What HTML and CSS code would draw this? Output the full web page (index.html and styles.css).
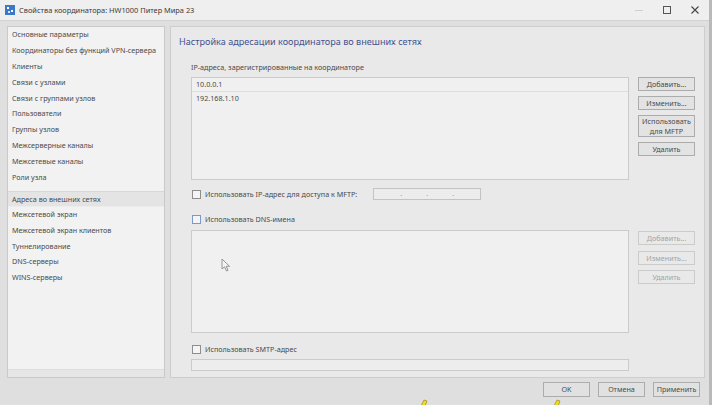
FILE: index.html
```html
<!DOCTYPE html>
<html lang="ru">
<head>
<meta charset="utf-8">
<link rel="stylesheet" href="styles.css">
</head>
<body>
<div class="window">
  <div class="titlebar">
    <svg class="appicon" width="10" height="10" viewBox="0 0 10 10"><rect x="0" y="0" width="10" height="10" fill="#3a78c9"/><rect x="2" y="2" width="2" height="2" fill="#fff"/><rect x="6" y="5" width="2" height="2" fill="#fff"/><rect x="3" y="6" width="2" height="2" fill="#cfe3ff"/></svg>
    <span class="title">Свойства координатора: HW1000 Питер Мира 23</span>
    <div class="controls">
      <span class="ctl"><svg width="10" height="10" viewBox="0 0 10 10"><line x1="1" y1="5.5" x2="9" y2="5.5" stroke="#d0d0d0" stroke-width="1"/></svg></span>
      <span class="ctl"><svg width="10" height="10" viewBox="0 0 10 10"><rect x="1.5" y="1.5" width="7" height="7" fill="none" stroke="#555" stroke-width="1"/></svg></span>
      <span class="ctl"><svg width="10" height="10" viewBox="0 0 10 10"><path d="M1.5 1.5 L8.5 8.5 M8.5 1.5 L1.5 8.5" stroke="#444" stroke-width="1.1"/></svg></span>
    </div>
  </div>
  <div class="main">
    <div class="nav">
      <ul class="navlist">
        <li>Основные параметры</li>
        <li>Координаторы без функций VPN-сервера</li>
        <li>Клиенты</li>
        <li>Связи с узлами</li>
        <li>Связи с группами узлов</li>
        <li>Пользователи</li>
        <li>Группы узлов</li>
        <li>Межсерверные каналы</li>
        <li>Межсетевые каналы</li>
        <li>Роли узла</li>
      </ul>
      <ul class="navlist second">
        <li class="sel">Адреса во внешних сетях</li>
        <li>Межсетевой экран</li>
        <li>Межсетевой экран клиентов</li>
        <li>Туннелирование</li>
        <li>DNS-серверы</li>
        <li>WINS-серверы</li>
      </ul>
      <div class="navfoot"></div>
    </div>
    <div class="content">
      <div class="hdr">Настройка адресации координатора во внешних сетях</div>
      <div class="sec">
        <div class="label">IP-адреса, зарегистрированные на координаторе</div>
        <div class="group">
          <div class="listbox">
            <div class="item first">10.0.0.1</div>
            <div class="item">192.168.1.10</div>
          </div>
          <div class="btns">
            <div class="btn">Добавить...</div>
            <div class="btn">Изменить...</div>
            <div class="btn tall">Использовать<br>для MFTP</div>
            <div class="btn">Удалить</div>
          </div>
        </div>
        <div class="chkrow mftp">
          <span class="chk"></span><span>Использовать IP-адрес для доступа к MFTP:</span>
          <div class="ipfield"><span>.</span><span>.</span><span>.</span></div>
        </div>
        <div class="chkrow dns">
          <span class="chk blue"></span><span>Использовать DNS-имена</span>
        </div>
        <div class="group g2">
          <div class="listbox"></div>
          <div class="btns dis">
            <div class="btn">Добавить...</div>
            <div class="btn">Изменить...</div>
            <div class="btn">Удалить</div>
          </div>
        </div>
        <div class="chkrow smtp">
          <span class="chk"></span><span>Использовать SMTP-адрес</span>
        </div>
        <div class="field"></div>
      </div>
    </div>
  </div>
  <div class="footer">
    <div class="fbtn">OK</div>
    <div class="fbtn">Отмена</div>
    <div class="fbtn">Применить</div>
  </div>
  <svg class="cursor" width="10" height="14" viewBox="0 0 10 14"><path d="M1 1 L1 11 L3.5 8.8 L5.5 13 L7 12.3 L5.2 8.3 L8.5 8.3 Z" fill="#f4f4f4" stroke="#8a8a8a" stroke-width="0.9" stroke-linejoin="round"/></svg>
  <svg class="mark m1" width="10" height="7" viewBox="0 0 10 7"><path d="M2 7 L5 1 L8 2 L6 7 Z" fill="#f2dc1c" stroke="#8a7a10" stroke-width="0.6"/></svg>
  <svg class="mark m2" width="10" height="7" viewBox="0 0 10 7"><path d="M2 7 L5 1 L8 2 L6 7 Z" fill="#f2dc1c" stroke="#8a7a10" stroke-width="0.6"/></svg>
</div>
</body>
</html>
```

FILE: styles.css
```css
* { box-sizing: border-box; }
html, body { margin: 0; padding: 0; }
body {
  width: 712px;
  height: 405px;
  overflow: hidden;
  background: #dedede;
  font-family: "Noto Sans", "Open Sans", sans-serif;
  font-size: 7.2px;
  color: #4a4a4a;
}
.window {
  position: relative;
  width: 712px;
  height: 405px;
  display: flex;
  flex-direction: column;
  background: #dfdfdf;
  border-right: 3px solid #b9b9b9;
}
.titlebar {
  height: 21px;
  flex: none;
  display: flex;
  align-items: center;
  padding-left: 5px;
  background: #efefef;
  border-bottom: 1px solid #d2d2d2;
}
.appicon { flex: none; margin-right: 4px; }
.title { font-size: 7.4px; color: #3a3a3a; }
.controls { margin-left: auto; display: flex; }
.ctl { width: 28px; height: 20px; display: flex; align-items: center; justify-content: center; }
.main {
  flex: none;
  height: 357px;
  display: flex;
  gap: 5px;
  padding: 5px 4px 0 7px;
}
.nav {
  width: 158px;
  height: 352px;
  background: #f2f2f2;
  border: 1px solid #c9c9c9;
  display: flex;
  flex-direction: column;
}
.navlist { list-style: none; margin: 0; padding: 0; }
.navlist li {
  height: 15.9px;
  line-height: 15.9px;
  padding-left: 4px;
  white-space: nowrap;
  color: #4a4a4a;
}
.navlist.second { margin-top: 5px; }
.navlist li.sel {
  background: #e4e4e4;
  border-top: 1px solid #d8d8d8;
  border-bottom: 1px solid #ececec;
}
.navfoot {
  margin-top: auto;
  height: 8px;
  background: #e6e6e6;
  border-top: 1px solid #dcdcdc;
}
.content {
  flex: 1;
  height: 352px;
  background: #e9e9e9;
  border: 1px solid #cdcdcd;
  padding-left: 8px;
}
.hdr {
  margin-top: 8px;
  height: 13px;
  line-height: 13px;
  font-size: 9.1px;
  color: #44528f;
}
.sec { padding-left: 12px; }
.label { margin-top: 14px; height: 10px; line-height: 10px; }
.group { display: flex; gap: 9px; margin-top: 5px; }
.listbox {
  width: 438px;
  height: 103px;
  background: #f0f0f0;
  border: 1px solid #cbcbcb;
}
.item {
  height: 14px;
  line-height: 13px;
  padding-left: 4px;
}
.item.first { border-bottom: 1px solid #dedede; }
.btns { display: flex; flex-direction: column; gap: 5px; }
.btn {
  width: 57px;
  height: 14px;
  line-height: 12px;
  text-align: center;
  background: #e3e3e3;
  border: 1px solid #acacac;
  color: #4a4a4a;
}
.btn.tall { height: 22px; line-height: 9.5px; padding-top: 1px; }
.g2 .btns { padding-top: 1px; gap: 5.5px; }
.btns.dis .btn { color: #a3a3a3; border-color: #cbcbcb; background: #e9e9e9; }
.chkrow { display: flex; align-items: center; height: 12px; }
.chk {
  width: 9px;
  height: 9px;
  margin-left: 1px;
  margin-right: 4px;
  background: #f4f4f4;
  border: 1px solid #8e8e8e;
  flex: none;
}
.chk.blue { border-color: #7f97c8; }
.mftp { margin-top: 8px; }
.dns { margin-top: 13px; }
.smtp { margin-top: 10px; }
.ipfield {
  margin-left: 16px;
  width: 108px;
  height: 12px;
  border: 1px solid #c3c3c3;
  background: #ececec;
  display: flex;
  justify-content: space-around;
  padding: 0 14px;
  line-height: 9px;
  color: #9a9a9a;
}
.field {
  margin-top: 4px;
  width: 438px;
  height: 12px;
  background: #ededed;
  border: 1px solid #cbcbcb;
}
.footer {
  flex: 1;
  display: flex;
  justify-content: flex-end;
  align-items: flex-start;
  gap: 8px;
  padding: 4px 9px 0 0;
}
.fbtn {
  width: 47px;
  height: 15px;
  line-height: 13px;
  text-align: center;
  background: #e1e1e1;
  border: 1px solid #acacac;
  color: #4a4a4a;
}
.cursor { position: absolute; left: 221px; top: 258px; }
.mark { position: absolute; top: 399px; }
.m1 { left: 419px; }
.m2 { left: 552px; }
```
